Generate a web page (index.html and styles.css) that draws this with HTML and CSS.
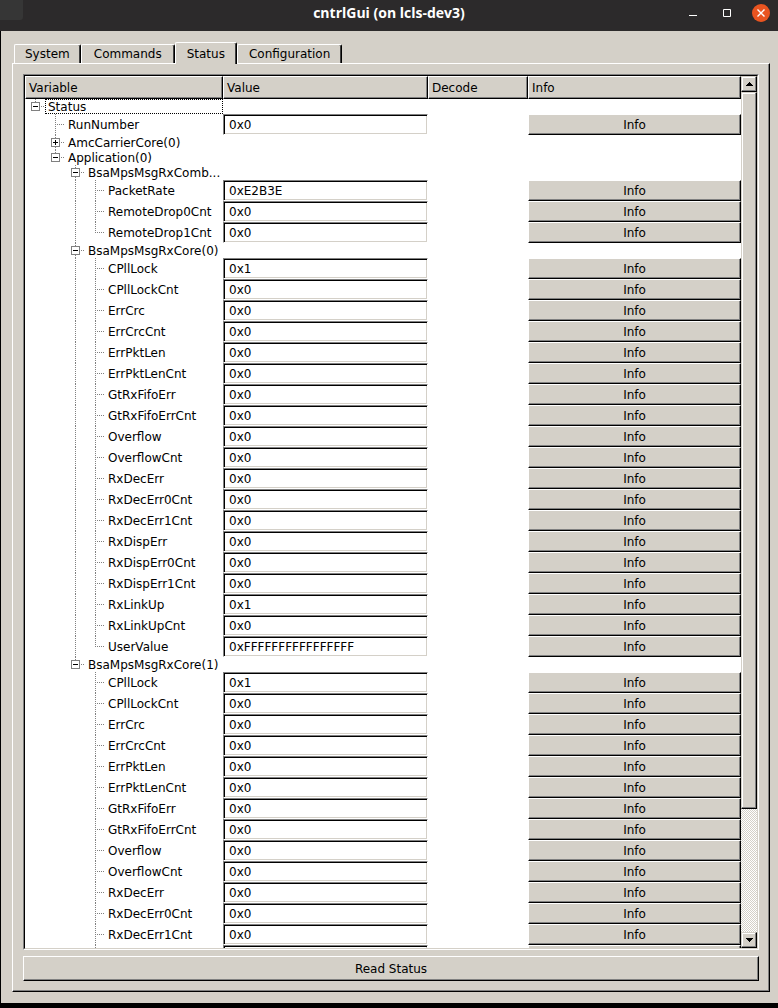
FILE: index.html
```html
<!DOCTYPE html>
<html lang="en">
<head>
<meta charset="utf-8">
<title>cntrlGui (on lcls-dev3)</title>
<link rel="stylesheet" href="styles.css">
</head>
<body>
<div class="window">
  <header class="titlebar">
    <h1 class="title">cntrlGui (on lcls-dev3)</h1>
    <div class="controls">
      <button class="control" type="button" aria-label="Minimize"><svg width="18" height="18" viewBox="0 0 18 18"><path d="M5 11.5h8" stroke="#fff" fill="none"/></svg></button>
      <button class="control" type="button" aria-label="Maximize"><svg width="18" height="18" viewBox="0 0 18 18"><path d="M5.5 5.5h7v7h-7z" stroke="#fff" fill="none"/></svg></button>
      <button class="control" type="button" aria-label="Close"><svg width="18" height="18" viewBox="0 0 18 18"><circle cx="9" cy="9" r="9" fill="#e95420"/><path d="M5.5 5.5l7 7M12.500 5.500l-7 7" stroke="#fff" stroke-width="1.400" fill="none"/></svg></button>
    </div>
  </header>
  <main class="content">
    <nav class="tabs" role="tablist">
      <button class="tab" type="button" role="tab">System</button>
      <button class="tab" type="button" role="tab">Commands</button>
      <button class="tab tab-active" type="button" role="tab" aria-selected="true">Status</button>
      <button class="tab" type="button" role="tab">Configuration</button>
    </nav>
    <section class="pane">
      <div class="frame">
        <div class="view">
          <div class="list">
            <table class="tree">
              <colgroup><col class="col-variable"><col class="col-value"><col class="col-decode"><col></colgroup>
              <thead><tr><th>Variable</th><th>Value</th><th>Decode</th><th>Info</th></tr></thead>
              <tbody id="rows"></tbody>
            </table>
          </div>
          <div class="scrollbar">
            <button class="arrow" type="button" aria-label="Scroll up"><svg width="7" height="4" viewBox="0 0 7 4" shape-rendering="crispEdges"><path d="M3 0h1v1h1v1h1v1h1v1H0V3h1V2h1V1h1z"/></svg></button>
            <div class="track"><div class="thumb"></div></div>
            <button class="arrow" type="button" aria-label="Scroll down"><svg width="7" height="4" viewBox="0 0 7 4" shape-rendering="crispEdges"><path d="M0 0h7v1H6v1H5v1H4v1H3V3H2V2H1V1H0z"/></svg></button>
          </div>
        </div>
      </div>
      <button class="read" type="button">Read Status</button>
    </section>
  </main>
</div>
<script src="tree.js"></script>
</body>
</html>
```
FILE: styles.css
```css
* { box-sizing: border-box; }

body {
  margin: 0;
  background: #000;
  color: #000;
  font: 12px/15px "DejaVu Sans", Verdana, sans-serif;
}

button, input { font: inherit; color: inherit; margin: 0; border-radius: 0; }

.window {
  display: flex;
  flex-direction: column;
  height: 100vh;
  padding-bottom: 5px;
}

.titlebar {
  display: grid;
  grid-template-columns: 1fr auto 1fr;
  align-items: center;
  flex: none;
  height: 31px;
  padding-bottom: 5px;
  background: #2c2a2b;
}
.titlebar::before {
  content: "";
  align-self: start;
  width: 23px;
  height: 20px;
  border-radius: 0 0 3px 0;
  background: #363636;
}
.title {
  margin: 0;
  color: #fff;
  font: bold 14px/26px "Open Sans", "Noto Sans", sans-serif;
}
.controls { display: flex; justify-content: flex-end; gap: 16px; padding-right: 8px; }
.control { display: flex; padding: 0; border: 0; background: none; }

.content {
  display: flex;
  flex-direction: column;
  flex: 1;
  min-height: 0;
  margin-left: 1px;
  padding: 11px 8px 11px 11px;
  background: #d4d0c8;
}

.tabs { display: flex; align-items: flex-end; height: 21px; padding-left: 2px; }
.tab {
  height: 19px;
  padding: 1px 11px 0;
  border: 1px solid #fff;
  border-right-color: #000;
  border-bottom: 0;
  border-radius: 2px 2px 0 0;
  background: #d4d0c8;
  box-shadow: inset -1px 0 #404040;
}
.tab:nth-child(1) { padding: 1px 10px 0; }
.tab:nth-child(2) { padding: 1px 12px 0; }
.tab-active {
  z-index: 1;
  height: 22px;
  margin-bottom: -1px;
}

.pane {
  display: flex;
  flex-direction: column;
  flex: 1;
  gap: 6px;
  min-height: 0;
  padding: 10px;
  border: 1px solid;
  border-color: #fff #000 #000 #fff;
  box-shadow: inset -1px -1px #808080;
}

.frame {
  display: flex;
  flex: 1;
  min-height: 0;
  border: 1px solid;
  border-color: #808080 #fff #fff #808080;
}
.view {
  display: flex;
  flex: 1;
  min-width: 0;
  border: 1px solid;
  border-color: #000 #d4d0c8 #d4d0c8 #000;
  background: #fff;
}
.list { flex: 1; min-width: 0; overflow: hidden; }

.tree { width: 100%; table-layout: fixed; border-collapse: separate; border-spacing: 0; }
.col-variable { width: 198px; }
.col-value { width: 205px; }
.col-decode { width: 100px; }
.tree th {
  height: 23px;
  padding: 2px 3px 0;
  border: 1px solid;
  border-color: #fff #000 #000 #fff;
  background: #d4d0c8;
  box-shadow: inset -1px -1px #808080;
  font-weight: normal;
  text-align: left;
}
.tree td { height: 15px; padding: 0; }

.node { display: flex; height: 15px; }
.leaf .node { height: 21px; }
.label {
  flex: 1;
  min-width: 0;
  padding-left: 3px;
  line-height: 17px;
  white-space: nowrap;
}
.leaf .label { line-height: 22px; }
.focused .label {
  padding-left: 2px;
  border: 1px dotted #000;
  line-height: 15px;
}

.guide { position: relative; flex: none; width: 20px; }
.line, .tee, .elbow {
  --dots: repeating-linear-gradient(#808080 0 1px, transparent 1px 2px);
  --dash: repeating-linear-gradient(90deg, #808080 0 1px, transparent 1px 2px);
  background-repeat: no-repeat;
}
.line { background-image: var(--dots); background-size: 1px 100%; background-position: 10px 0; }
.tee, .elbow {
  background-image: var(--dots), var(--dash);
  background-position: 10px 0, 10px 50%;
}
.tee { background-size: 1px 100%, 10px 1px; }
.elbow { background-size: 1px 50%, 10px 1px; }

.toggle {
  position: absolute;
  top: 3px;
  left: 6px;
  width: 9px;
  height: 9px;
  padding: 0;
  border: 1px solid #808080;
  background: linear-gradient(#000, #000) center / 5px 1px no-repeat #fff;
}
.toggle-closed {
  background:
    linear-gradient(#000, #000) center / 5px 1px no-repeat,
    linear-gradient(#000, #000) center / 1px 5px no-repeat #fff;
}

.value, .info { display: block; width: 100%; height: 21px; border: 1px solid; }
.value {
  padding: 0 5px;
  border-color: #808080 #fff #fff #808080;
  background: #fff;
  box-shadow: inset 1px 1px #000, inset -1px -1px #d4d0c8;
  outline: 0;
}
.info, .arrow, .thumb, .read {
  padding: 0;
  border: 1px solid;
  border-color: #fff #000 #000 #fff;
  background: #d4d0c8;
  box-shadow: inset -1px -1px #808080;
}
.info, .read { padding-top: 2px; }

.scrollbar { display: flex; flex-direction: column; flex: none; width: 16px; }
.arrow, .thumb {
  border-color: #d4d0c8 #000 #000 #d4d0c8;
  box-shadow: inset -1px -1px #808080, inset 1px 1px #fff;
}
.arrow { display: flex; align-items: center; justify-content: center; flex: none; height: 16px; }
.track {
  flex: 1;
  background: repeating-conic-gradient(#d4d0c8 0 25%, #fff 0 50%) 0 0 / 2px 2px;
}
.thumb { height: 85.4%; }

.read { flex: none; height: 25px; }
```
FILE: tree.js
```js
const core = value => [
  ["CPllLock", "0x1"], ["CPllLockCnt", "0x0"], ["ErrCrc", "0x0"], ["ErrCrcCnt", "0x0"],
  ["ErrPktLen", "0x0"], ["ErrPktLenCnt", "0x0"], ["GtRxFifoErr", "0x0"], ["GtRxFifoErrCnt", "0x0"],
  ["Overflow", "0x0"], ["OverflowCnt", "0x0"], ["RxDecErr", "0x0"], ["RxDecErr0Cnt", "0x0"],
  ["RxDecErr1Cnt", "0x0"], ["RxDispErr", "0x0"], ["RxDispErr0Cnt", "0x0"], ["RxDispErr1Cnt", "0x0"],
  ["RxLinkUp", "0x1"], ["RxLinkUpCnt", "0x0"], ["UserValue", value]
];

const root = ["Status", [
  ["RunNumber", "0x0"],
  ["AmcCarrierCore(0)", []],
  ["Application(0)", [
    ["BsaMpsMsgRxComb...", [["PacketRate", "0xE2B3E"], ["RemoteDrop0Cnt", "0x0"], ["RemoteDrop1Cnt", "0x0"]]],
    ["BsaMpsMsgRxCore(0)", core("0xFFFFFFFFFFFFFFFF")],
    ["BsaMpsMsgRxCore(1)", core("0xFFFFFFFFFFFFFFFF").slice(0, 14)]
  ]]
]];

const body = document.getElementById("rows");
let count = 0;

function addRow([name, content], guides, joint) {
  const leaf = typeof content === "string";
  const id = "var" + count++;
  const toggle = leaf ? "" :
    `<button type="button" class="toggle${content.length ? "" : " toggle-closed"}" aria-label="Toggle ${name}"></button>`;
  const cells = guides.map(g => `<span class="guide ${g}"></span>`).join("");
  const row = document.createElement("tr");
  row.className = leaf ? "leaf" : joint === "start" ? "focused" : "branch";
  row.innerHTML =
    `<td><div class="node">${cells}<span class="guide ${joint === "start" ? "elbow" : joint}">${toggle}</span>` +
    (leaf ? `<label class="label" for="${id}">${name}</label>` : `<span class="label">${name}</span>`) +
    `</div></td>` +
    `<td>${leaf ? `<input class="value" id="${id}" type="text" value="${content}">` : ""}</td><td></td>` +
    `<td>${leaf ? `<button class="info" type="button">Info</button>` : ""}</td>`;
  body.append(row);
  if (leaf) return;
  const next = [...guides, joint === "tee" ? "line" : "blank"];
  content.forEach((child, i) => addRow(child, next, i === content.length - 1 ? "elbow" : "tee"));
}

addRow(root, [], "start");
```
